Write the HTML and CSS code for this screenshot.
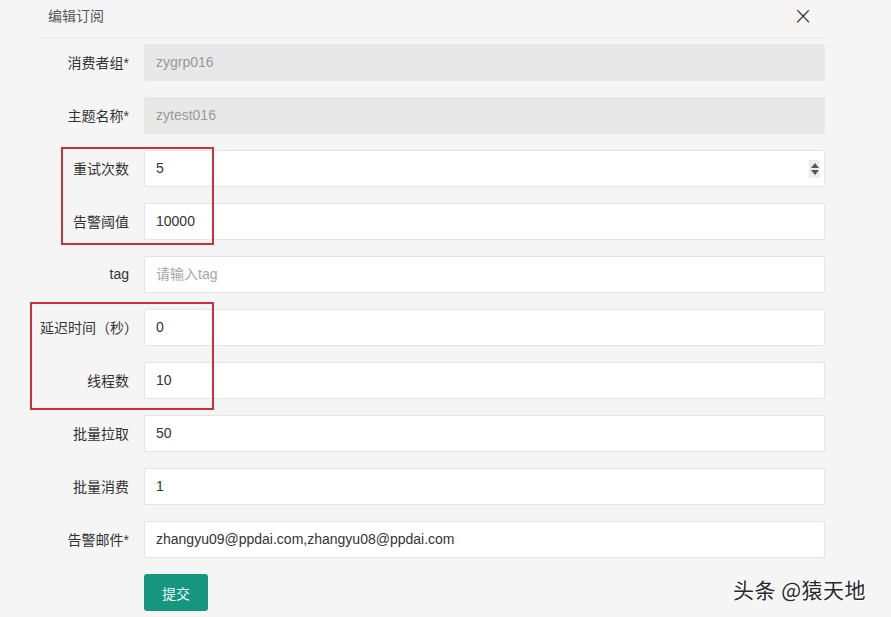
FILE: index.html
```html
<!DOCTYPE html>
<html lang="zh-CN">
<head>
    <meta charset="UTF-8">
    <meta name="viewport" content="width=device-width, initial-scale=1.0">
    <title>编辑订阅</title>
    <link rel="stylesheet" href="styles.css">
</head>
<body>
    <div class="modal">
        <div class="modal-header">
            <span class="modal-title">编辑订阅</span>
            <span class="close">&times;</span>
        </div>
        <form class="form">
            <div class="row">
                <label>消费者组*</label>
                <div class="control disabled"><input type="text" value="zygrp016" disabled></div>
            </div>
            <div class="row">
                <label>主题名称*</label>
                <div class="control disabled"><input type="text" value="zytest016" disabled></div>
            </div>
            <div class="row">
                <label>重试次数</label>
                <div class="control">
                    <input type="text" value="5">
                    <span class="spin"><i class="up"></i><i class="down"></i></span>
                </div>
            </div>
            <div class="row">
                <label>告警阈值</label>
                <div class="control"><input type="text" value="10000"></div>
            </div>
            <div class="row">
                <label>tag</label>
                <div class="control"><input type="text" placeholder="请输入tag"></div>
            </div>
            <div class="row">
                <label>延迟时间（秒）</label>
                <div class="control"><input type="text" value="0"></div>
            </div>
            <div class="row">
                <label>线程数</label>
                <div class="control"><input type="text" value="10"></div>
            </div>
            <div class="row">
                <label>批量拉取</label>
                <div class="control"><input type="text" value="50"></div>
            </div>
            <div class="row">
                <label>批量消费</label>
                <div class="control"><input type="text" value="1"></div>
            </div>
            <div class="row">
                <label>告警邮件*</label>
                <div class="control"><input type="text" value="zhangyu09@ppdai.com,zhangyu08@ppdai.com"></div>
            </div>
            <div class="row">
                <span></span>
                <div><button type="button" class="submit">提交</button></div>
            </div>
        </form>
    </div>

    <!-- 标注框 -->
    <div class="mark mark-1"></div>
    <div class="mark mark-2"></div>

    <div class="watermark">头条 @猿天地</div>
</body>
</html>
```

FILE: styles.css
```css
body {
    margin: 0;
    background: #f6f5f6;
    font-family: "Liberation Sans", "Noto Sans CJK SC", sans-serif;
    font-size: 14px;
    color: #333;
    height: 617px;
    overflow: hidden;
    position: relative;
}

.modal {
    margin-left: 40px;
    width: 785px;
}

.modal-header {
    display: flex;
    justify-content: space-between;
    align-items: flex-start;
    height: 31px;
    padding: 4px 12px 0 8px;
    border-bottom: 2px solid #fbfafb;
    box-shadow: 0 1px 0 #eeedee;
}

.modal-title {
    color: #555;
    font-size: 14px;
    line-height: 22px;
    font-family: "Noto Sans CJK SC", sans-serif;
}

.close {
    font-size: 24px;
    font-weight: 300;
    color: #333;
    line-height: 24px;
    font-family: "DejaVu Sans", sans-serif;
}

.form {
    padding-top: 7px;
}

.row {
    display: grid;
    grid-template-columns: 104px 1fr;
    align-items: center;
    height: 37px;
    margin-bottom: 16px;
}

.row label {
    text-align: right;
    padding-right: 15px;
    white-space: nowrap;
    color: #333;
    margin-top: -2px;
}

.control {
    display: flex;
    align-items: center;
    height: 37px;
    box-sizing: border-box;
    background: #fff;
    border: 1px solid #e6e5e6;
    border-radius: 2px;
}

.control input {
    flex: 1;
    border: none;
    outline: none;
    background: transparent;
    padding: 0 11px 2px;
    font: inherit;
    color: #333;
    height: 100%;
    box-sizing: border-box;
}

.control input::placeholder {
    color: #a5a5a5;
}

.control.disabled {
    background: #e9e8e9;
    border-color: #e9e8e9;
}

.control.disabled input {
    color: #999;
}

.spin {
    display: flex;
    flex-direction: column;
    align-items: center;
    gap: 2px;
    width: 11px;
    padding: 3px 0;
    margin-right: 4px;
    background: #ebebeb;
}

.spin i {
    width: 0;
    height: 0;
    border-left: 4px solid transparent;
    border-right: 4px solid transparent;
}

.spin .up {
    border-bottom: 5px solid #555;
}

.spin .down {
    border-top: 5px solid #555;
}

.submit {
    height: 37px;
    width: 64px;
    border: none;
    border-radius: 3px;
    background: #16967f;
    color: #e8fbf6;
    font-family: "Noto Sans CJK SC", sans-serif;
    font-size: 14px;
    cursor: pointer;
}

.mark {
    position: absolute;
    border: 2px solid #c8323c;
}

.mark-1 {
    left: 61px;
    top: 147px;
    width: 149px;
    height: 94px;
}

.mark-2 {
    left: 30px;
    top: 302px;
    width: 180px;
    height: 104px;
}

.watermark {
    position: absolute;
    left: 733px;
    top: 574px;
    font-family: "Noto Sans CJK SC", sans-serif;
    font-size: 21px;
    letter-spacing: 0.5px;
    color: #2a2a2a;
    text-shadow: 1px 1px 0 #fff, -1px 0 0 #fff;
}
```
